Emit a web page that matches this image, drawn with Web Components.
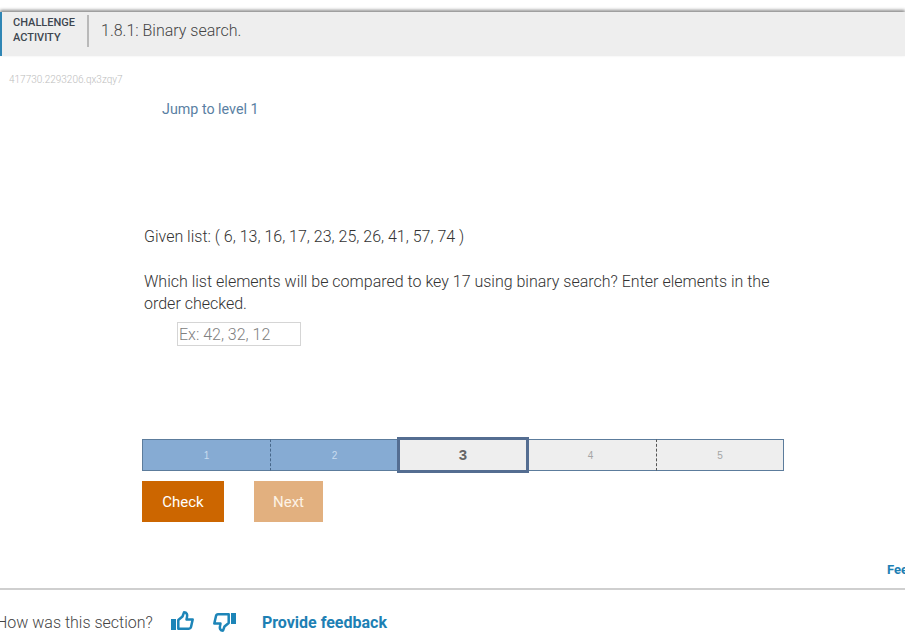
<!DOCTYPE html>
<html>
<head>
<meta charset="utf-8">
<title>Binary search</title>
<style>
  html, body { margin: 0; padding: 0; background: #fff; overflow: hidden; }
  body { width: 905px; height: 642px; font-family: Roboto, "Liberation Sans", sans-serif; font-weight: 300; color: #333; }
</style>
</head>
<body>
<activity-page></activity-page>
<script>
const activityHeader = document.createElement('template');
activityHeader.innerHTML = `
<style>
  :host { display: flex; align-items: center; height: 44px; margin-top: 12px; padding-bottom: 7px; background: #eeeeee; border-left: 2px solid #2f86b5; box-sizing: border-box; box-shadow: 0 -2px 3px rgba(0,0,0,.45); }
  .kind { width: 75px; padding: 0 0 2px 11px; box-sizing: border-box; font-size: 11px; line-height: 15px; font-weight: 500; color: #3d4650; }
  .rule { width: 2px; height: 32px; background: #b9b9b9; margin-left: 10px; }
  .title { margin-left: 12px; font-size: 16px; color: #444; }
</style>
<div class="kind">CHALLENGE<br>ACTIVITY</div>
<div class="rule"></div>
<div class="title"><slot></slot></div>`;
class ActivityHeader extends HTMLElement {
  constructor() {
    super();
    this.attachShadow({ mode: 'open' });
    this.shadowRoot.appendChild(activityHeader.content.cloneNode(true));
  }
}
customElements.define('activity-header', ActivityHeader);

const levelBar = document.createElement('template');
levelBar.innerHTML = `
<style>
  :host { display: flex; width: 642px; height: 32px; margin-left: 142px; box-sizing: border-box; font-family: "Liberation Sans", Arial, sans-serif; font-weight: 400; }
  .level { flex: none; box-sizing: border-box; height: 32px; width: 128px; display: flex; align-items: center; justify-content: center; font-size: 10px; border-top: 1px solid #5c7c9c; border-bottom: 1px solid #5c7c9c; }
  .done { background: #86abd3; color: #c9dcf0; }
  .todo { background: #eeeeee; color: #a5a5a5; }
  .first { border-left: 1px solid #5c7c9c; }
  .last { border-right: 1px solid #5c7c9c; }
  .dot { border-left: 1px dashed #47678a; }
  .todo.dot { border-left-color: #555; }
  .current { width: 132px; height: 36px; margin: -2px 0 0 -1px; padding-bottom: 2px; border: 3px solid #546d91; background: #eeeeee; color: #666; font-size: 15px; font-weight: 700; }
  .four { width: 127px; padding-right: 4px; }
</style>
<div class="level done first">1</div>
<div class="level done dot">2</div>
<div class="level current">3</div>
<div class="level todo four">4</div>
<div class="level todo dot last">5</div>`;
class LevelBar extends HTMLElement {
  constructor() {
    super();
    this.attachShadow({ mode: 'open' });
    this.shadowRoot.appendChild(levelBar.content.cloneNode(true));
  }
}
customElements.define('level-bar', LevelBar);

const actionButton = document.createElement('template');
actionButton.innerHTML = `
<style>
  :host { display: flex; align-items: center; justify-content: center; height: 41px; background: #cc6600; color: #fff; font-size: 15px; font-weight: 400; }
  :host([disabled]) { background: #e2b07f; color: #fdf3e6; }
</style>
<slot></slot>`;
class ActionButton extends HTMLElement {
  constructor() {
    super();
    this.attachShadow({ mode: 'open' });
    this.shadowRoot.appendChild(actionButton.content.cloneNode(true));
  }
}
customElements.define('action-button', ActionButton);

const sectionFeedback = document.createElement('template');
sectionFeedback.innerHTML = `
<style>
  :host { display: flex; align-items: center; height: 53px; padding-top: 13px; box-sizing: border-box; border-top: 2px solid #cfcfcf; white-space: nowrap; }
  .ask { margin-left: -4px; font-size: 16px; color: #444; }
  svg { display: block; flex: none; fill: none; stroke: #1d85b8; stroke-width: 2.5; stroke-linejoin: round; }
  .solid { fill: #1d85b8; stroke: none; }
  .up { margin-left: 17px; }
  .down { margin-left: 17px; }
  .link { margin-left: 25px; font-size: 16px; font-weight: 700; color: #1d80b4; }
</style>
<span class="ask">How was this section?</span>
<svg class="up" width="25" height="24" viewBox="0 0 25 24">
  <rect class="solid" x="1" y="9" width="5" height="11"/>
  <path d="M8.3 10 L12.5 6.5 L14 2.3 C17 2.3 17.5 5 17 7 L16.5 9.5 H22.7 L21 17 C20.7 18.3 20 18.8 19 18.8 H8.3 Z"/>
</svg>
<svg class="down" width="25" height="24" viewBox="0 0 25 24">
  <g transform="rotate(180 12.5 11.5)">
    <rect class="solid" x="1" y="9" width="5" height="11"/>
    <path d="M8.3 10 L12.5 6.5 L14 2.3 C17 2.3 17.5 5 17 7 L16.5 9.5 H22.7 L21 17 C20.7 18.3 20 18.8 19 18.8 H8.3 Z"/>
  </g>
</svg>
<span class="link">Provide feedback</span>`;
class SectionFeedback extends HTMLElement {
  constructor() {
    super();
    this.attachShadow({ mode: 'open' });
    this.shadowRoot.appendChild(sectionFeedback.content.cloneNode(true));
  }
}
customElements.define('section-feedback', SectionFeedback);

const activityPage = document.createElement('template');
activityPage.innerHTML = `
<style>
  :host { display: block; width: 905px; height: 642px; overflow: hidden; font-size: 16px; }
  .code { margin: 18px 0 0 9px; font-size: 10px; line-height: 12px; color: #bdbdbd; }
  .jump { margin: 13px 0 0 162px; font-size: 14.3px; line-height: 20px; font-weight: 400; color: #5a7fa3; }
  .prompt { margin: 107px 0 0 144px; width: 640px; font-size: 16px; line-height: 22px; color: #333; }
  .prompt p { margin: 0 0 23px; }
  .answer { display: block; margin: 7px 0 0 177px; width: 124px; height: 24px; padding: 0 1px; box-sizing: border-box; border: 1px solid #d5d5d5; background: #fff; font: 300 16px Roboto, sans-serif; color: #333; }
  .answer::placeholder { color: #808080; opacity: 1; }
  .bar { margin-top: 93px; }
  .actions { display: flex; gap: 30px; margin: 10px 0 0 142px; }
  .check { width: 82px; }
  .next { width: 69px; }
  .more { margin-top: 39px; padding-left: 887px; height: 18px; line-height: 18px; font-size: 13px; font-weight: 700; color: #1d80b4; white-space: nowrap; }
  section-feedback { margin-top: 9px; }
</style>
<activity-header>1.8.1: Binary search.</activity-header>
<div class="code">417730.2293206.qx3zqy7</div>
<div class="jump">Jump to level 1</div>
<div class="prompt">
  <p>Given list: ( 6, 13, 16, 17, 23, 25, 26, 41, 57, 74 )</p>
  <p style="margin:0">Which list elements will be compared to key 17 using binary search? Enter elements in the order checked.</p>
</div>
<input class="answer" placeholder="Ex: 42, 32, 12">
<level-bar class="bar"></level-bar>
<div class="actions">
  <action-button class="check">Check</action-button>
  <action-button class="next" disabled>Next</action-button>
</div>
<div class="more">Feedback?</div>
<section-feedback></section-feedback>`;
class ActivityPage extends HTMLElement {
  constructor() {
    super();
    this.attachShadow({ mode: 'open' });
    this.shadowRoot.appendChild(activityPage.content.cloneNode(true));
  }
}
customElements.define('activity-page', ActivityPage);
</script>
</body>
</html>
